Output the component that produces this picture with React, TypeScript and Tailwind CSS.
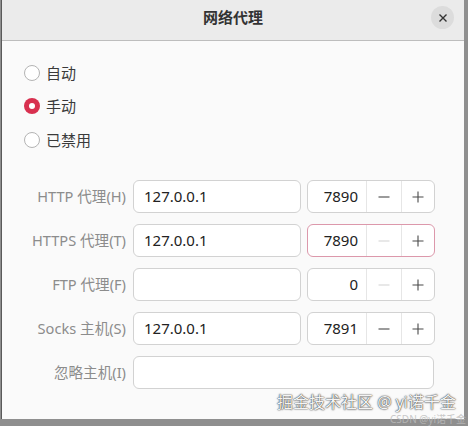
import React from 'react'

const font = { fontFamily: '"Noto Sans", "Noto Sans CJK SC", sans-serif' }

function Radio({ label, checked }: { label: string; checked?: boolean }) {
  return (
    <div className="flex items-center gap-[6px] h-[32px]">
      {checked ? (
        <span className="w-[16px] h-[16px] rounded-full bg-[#d8304f] flex items-center justify-center">
          <span className="w-[6px] h-[6px] rounded-full bg-white" />
        </span>
      ) : (
        <span className="w-[16px] h-[16px] rounded-full border border-[#b4b4b4] bg-white" />
      )}
      <span className="text-[15px] text-[#3a3a3a]">{label}</span>
    </div>
  )
}

function Minus({ disabled }: { disabled?: boolean }) {
  return (
    <svg width="14" height="14" viewBox="0 0 14 14">
      <path d="M1.5 7h11" stroke={disabled ? '#d6d6d6' : '#4a4a4a'} strokeWidth="1.1" />
    </svg>
  )
}

function Plus() {
  return (
    <svg width="14" height="14" viewBox="0 0 14 14">
      <path d="M1.5 7h11M7 1.5v11" stroke="#4a4a4a" strokeWidth="1.1" />
    </svg>
  )
}

function Spin({ value, minusDisabled, focused }: { value: string; minusDisabled?: boolean; focused?: boolean }) {
  return (
    <div
      className={`w-[128px] h-[33px] rounded-[6px] bg-white flex ${
        focused ? 'border-[1.5px] border-[#dc98ab]' : 'border border-[#d2d2d2]'
      }`}
    >
      <div className="w-[58px] flex items-center justify-end pr-[8px] text-[15px] text-[#222]">{value}</div>
      <div className="w-[35px] flex items-center justify-center border-l border-[#e6e6e6]">
        <Minus disabled={minusDisabled} />
      </div>
      <div className="flex-1 flex items-center justify-center border-l border-[#e6e6e6]">
        <Plus />
      </div>
    </div>
  )
}

function Row({ label, host, spin }: { label: string; host?: string; spin?: React.ReactNode }) {
  return (
    <div className="flex items-center h-[33px]">
      <div className="w-[124px] text-right text-[14.6px] text-[#8c8c8c] whitespace-nowrap">{label}</div>
      <div
        className={`ml-[7px] h-[33px] rounded-[6px] border border-[#d2d2d2] bg-white flex items-center px-[10px] text-[15px] text-[#222] ${
          spin ? 'w-[168px]' : 'w-[301px]'
        }`}
      >
        {host}
      </div>
      {spin && <div className="ml-[6px]">{spin}</div>}
    </div>
  )
}

export default function App() {
  return (
    <div className="w-[468px] h-[426px] bg-[#8f8f8f] relative overflow-hidden" style={font}>
      <div className="ml-px w-[463px] h-[419px] bg-[#fafafa] border-l border-[#5a5a5a] flex flex-col">
        <div className="h-[41px] bg-[#ebebeb] border-b border-[#bdbdbd] flex items-center justify-center relative pb-[5px]">
          <span className="text-[15px] font-bold text-[#333]">网络代理</span>
          <span className="absolute left-[429px] top-[6px] w-[23px] h-[23px] rounded-full bg-[#dcdcdc] flex items-center justify-center">
            <svg width="10" height="10" viewBox="0 0 10 10">
              <path d="M1.5 1.5l7 7M8.5 1.5l-7 7" stroke="#333" strokeWidth="1.4" />
            </svg>
          </span>
        </div>
        <div className="pl-[22px] pt-[16px] flex flex-col gap-[1px]">
          <Radio label="自动" />
          <Radio label="手动" checked />
          <div className="mt-[1px]">
            <Radio label="已禁用" />
          </div>
        </div>
        <div className="mt-[24px] flex flex-col gap-[11px]">
          <Row label="HTTP 代理(H)" host="127.0.0.1" spin={<Spin value="7890" />} />
          <Row label="HTTPS 代理(T)" host="127.0.0.1" spin={<Spin value="7890" minusDisabled focused />} />
          <Row label="FTP 代理(F)" spin={<Spin value="0" minusDisabled />} />
          <Row label="Socks 主机(S)" host="127.0.0.1" spin={<Spin value="7891" />} />
          <Row label="忽略主机(I)" />
        </div>
      </div>
      <div className="absolute right-[12px] top-[393px] leading-[19px] text-[16px] text-[#f4f4f4] [text-shadow:0_0_1px_#222,0_0_2px_#555]">
        掘金技术社区 @ yi诺千金
      </div>
      <div className="absolute right-[2px] top-[413px] leading-[12px] text-[10px] text-[#bdbdbd] opacity-80">
        CSDN @yi诺千金
      </div>
    </div>
  )
}
